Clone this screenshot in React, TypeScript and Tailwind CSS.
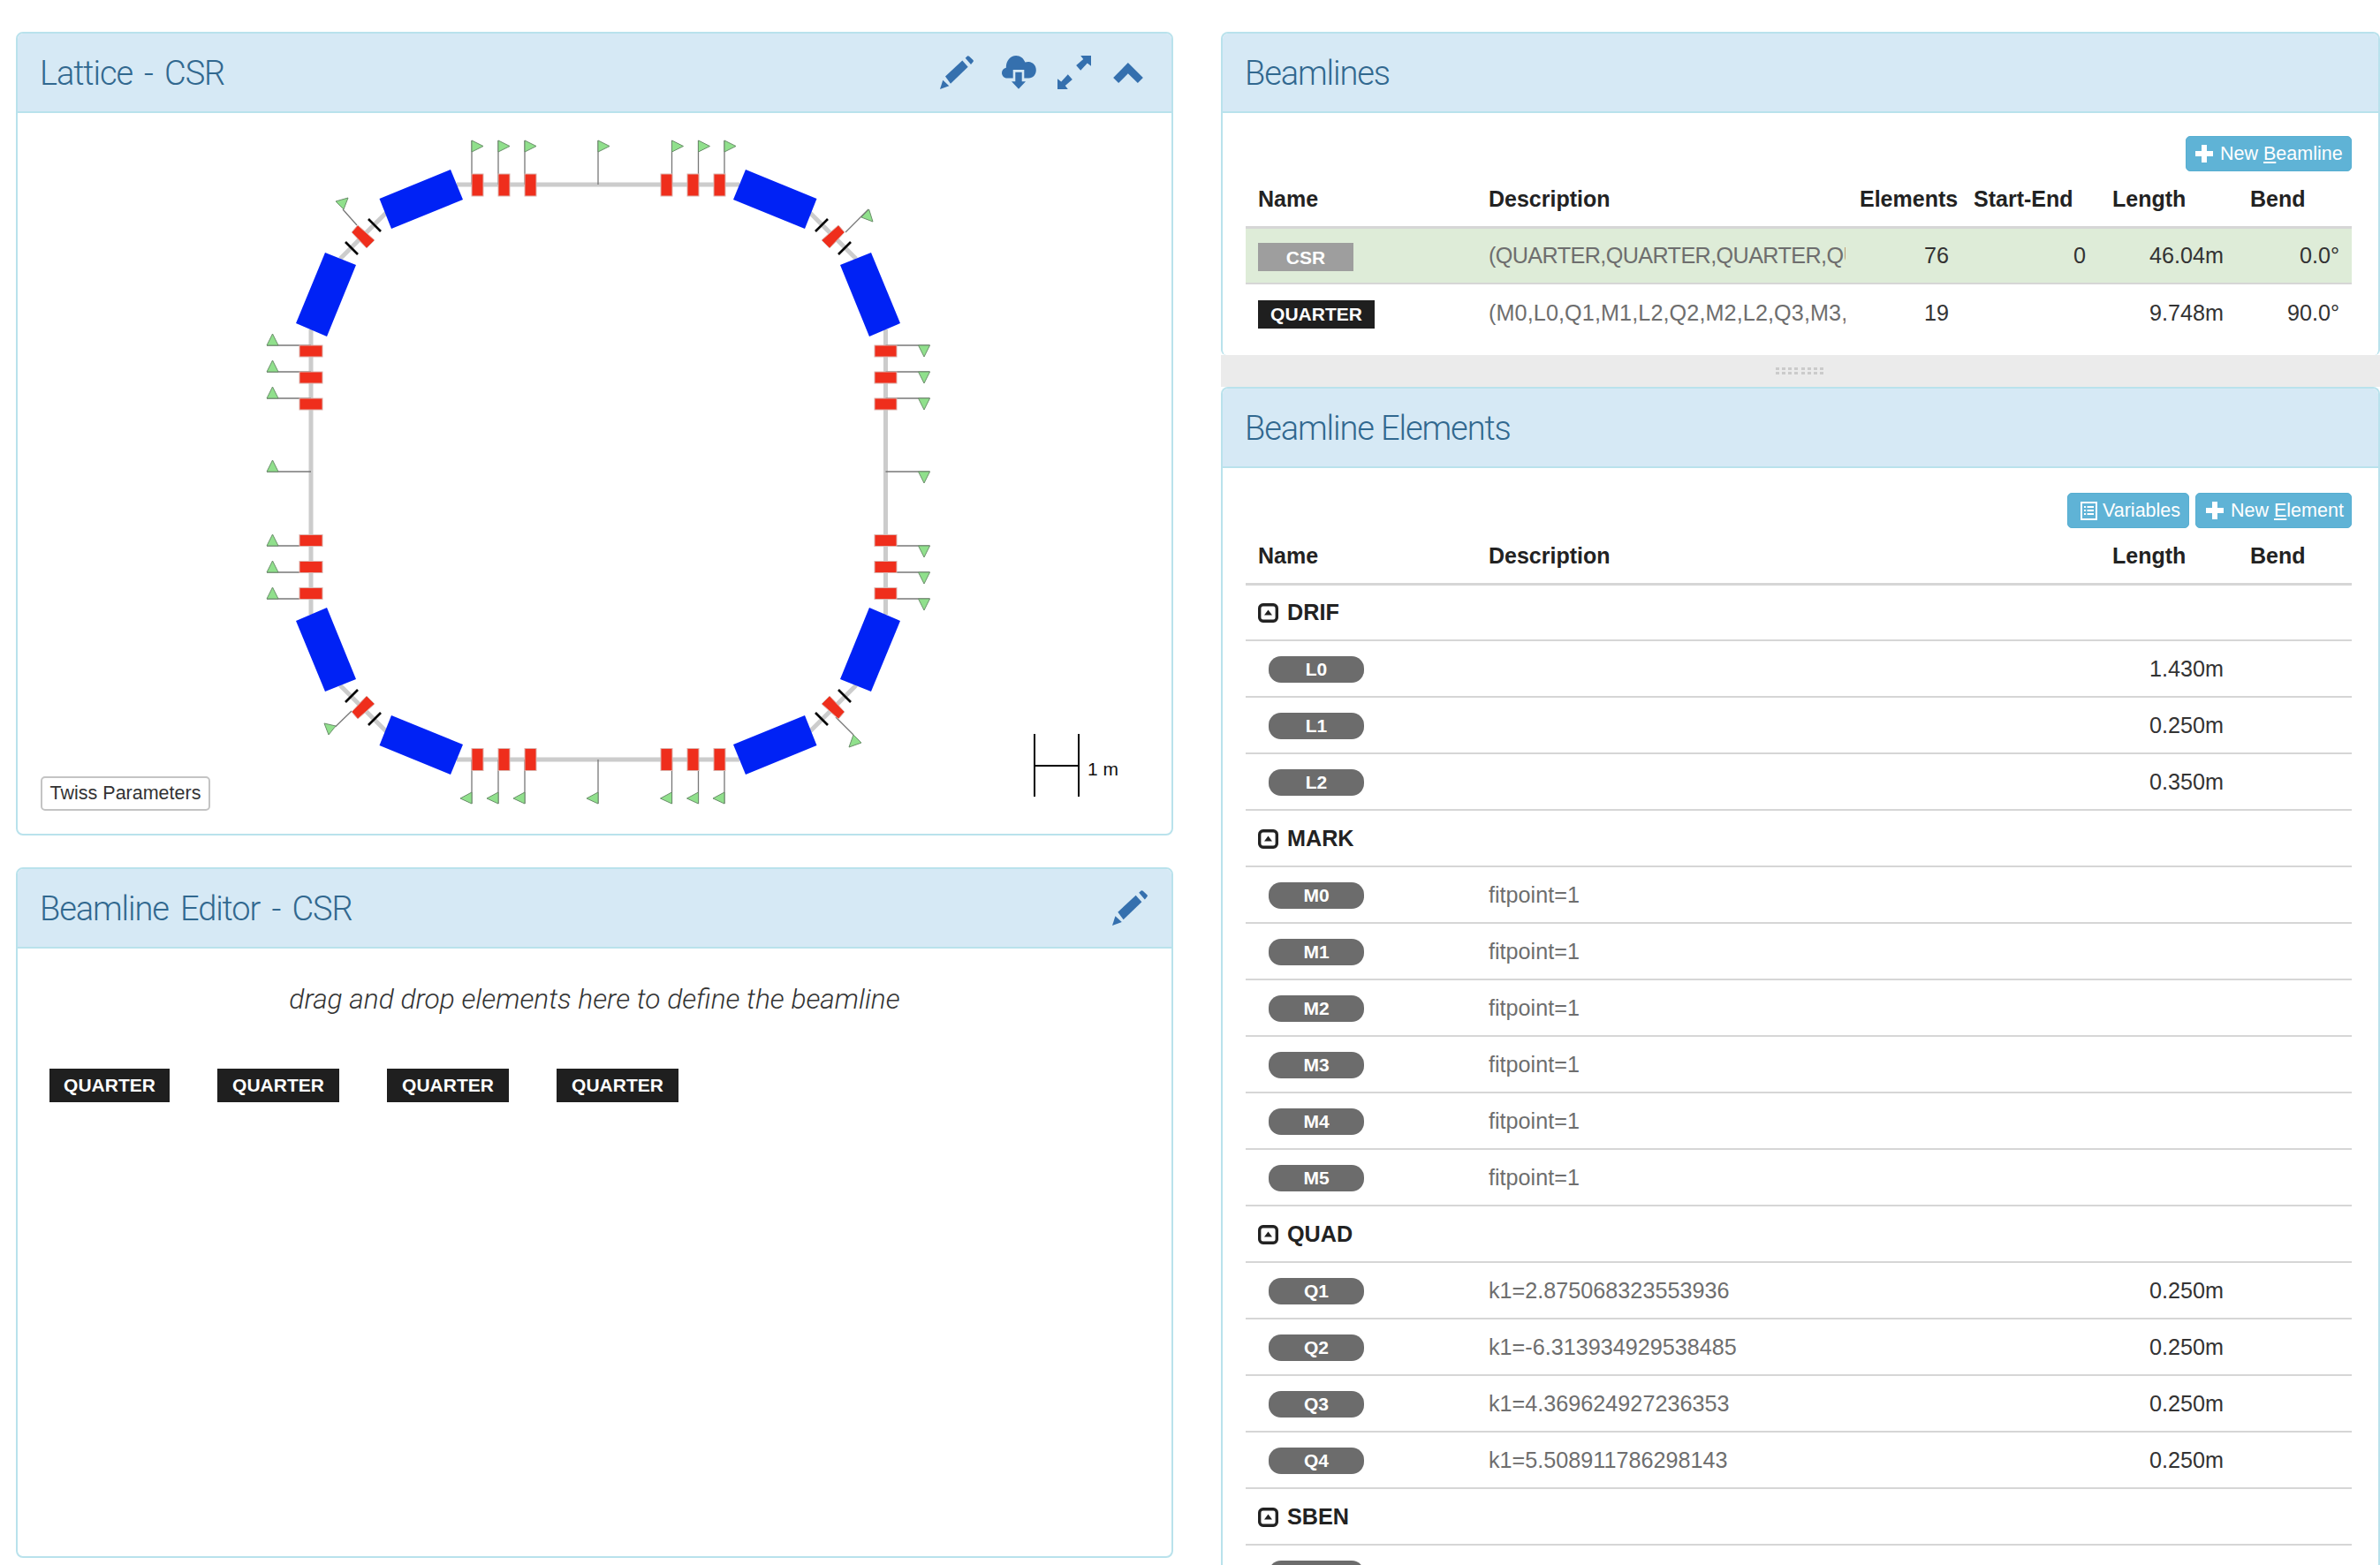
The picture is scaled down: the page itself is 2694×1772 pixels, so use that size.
import type { ReactNode } from "react";

const sans = "font-['Liberation_Sans',Arial,sans-serif]";
const light = "font-['Roboto',sans-serif]";

function PencilIcon({ className }: { className?: string }) {
  return (
    <svg viewBox="0 0 38 38" className={className} fill="#3570ae">
      <path d="M0 38 L3.3 27.7 L10.3 34.3 Z" />
      <path d="M6 23.5 L25.3 5.5 L31.7 12.7 L12 31.7 Z" />
      <path d="M28.7 2.7 L31 0.5 Q32 -0.3 33 0.7 L37.5 5 Q38.3 6 37.5 7 L35 10 Z" />
    </svg>
  );
}

function CloudIcon() {
  return (
    <svg viewBox="0 0 39 38" className="w-[39px] h-[38px]">
      <path
        fill="#3570ae"
        d="M6 25.5 C2.5 25.5 0 22.8 0 19.5 C0 16.6 2 14.4 4.8 13.8 C4.6 6 9.6 0 16.2 0 C20.8 0 24.6 2.8 26.4 7.6 C27.6 7.1 29 6.9 30.4 7 C35.4 7.4 38.8 11.4 38.8 16.2 C38.8 21.6 35.2 25.5 30.5 25.5 Z"
      />
      <rect x="12.7" y="16" width="12.6" height="10" fill="#d6e9f5" />
      <path fill="#3570ae" d="M15.3 18.7 H22.7 V29.3 H27 L19 37.7 L11 29.3 H15.3 Z" />
    </svg>
  );
}

function ExpandIcon() {
  return (
    <svg viewBox="0 0 37.7 37.7" className="w-[38px] h-[38px]" fill="#3570ae">
      <path d="M26 0 H37.7 V11.7 L33.5 8.5 L26 16.7 L21 11 L29 4 Z" />
      <path d="M11.7 37.7 H0 V26 L4.2 29.2 L11.7 21 L16.7 26.7 L8.7 33.7 Z" />
    </svg>
  );
}

function ChevronIcon() {
  return (
    <svg viewBox="0 0 33.7 23" className="w-[34px] h-[23px] ml-[1px]" fill="#3570ae">
      <path d="M16.7 0 L33.7 17 L27.7 23 L16.7 12.3 L6 23 L0 17 Z" />
    </svg>
  );
}

function PlusIcon() {
  return (
    <svg viewBox="0 0 20 20" className="w-[20px] h-[20px] shrink-0" fill="white">
      <path d="M7 0 H13 V7 H20 V13 H13 V20 H7 V13 H0 V7 H7 Z" />
    </svg>
  );
}

function ListIcon() {
  return (
    <svg viewBox="0 0 19 21" className="w-[19px] h-[21px] shrink-0" fill="white">
      <path fillRule="evenodd" d="M0 0 H19 V21 H0 Z M2 2 V19 H17 V2 Z" />
      <path d="M4 5 H6 V7 H4 Z M7.5 5 H15 V7 H7.5 Z M4 9 H6 V11 H4 Z M7.5 9 H15 V11 H7.5 Z M4 13 H6 V15 H4 Z M7.5 13 H15 V15 H7.5 Z" />
    </svg>
  );
}

function CollapseIcon() {
  return (
    <svg viewBox="0 0 23 22" className="w-[23px] h-[22px] shrink-0">
      <rect x="1.7" y="1.7" width="19.6" height="18.6" rx="4" fill="none" stroke="#222" strokeWidth="3.4" />
      <path d="M11.5 7.5 L16 13.5 H7 Z" fill="#222" />
    </svg>
  );
}

function PanelHeader({ title, children }: { title: string; children?: ReactNode }) {
  const spaced = title.includes(" - ");
  return (
    <div className="h-[90px] shrink-0 bg-[#d6e9f5] border-b-2 border-[#b9e2ec] rounded-t-[6px] flex items-center justify-between pl-[25px] pr-[32px]">
      <span className={`${light} font-light text-[38px] tracking-[-1.1px] pt-[2px] text-[#31688f] ${spaced ? "[word-spacing:5px]" : ""}`}>
        {title}
      </span>
      {children}
    </div>
  );
}

function Panel({ className, children }: { className: string; children: ReactNode }) {
  return <div className={`flex flex-col border-2 border-[#b9e2ec] rounded-[8px] bg-white ${className}`}>{children}</div>;
}

// ---- lattice drawing, mirrored around the ring centre ----
const CX = 677;
const CY = 534.5;
const RED = "#ef2e1c";
const GREEN = "#90e08c";

type Pt = [number, number];
const pts = (list: Pt[]) => list.map((p) => p.join(",")).join(" ");
const mirX = (list: Pt[]) => list.map(([x, y]) => [2 * CX - x, y] as Pt);
const mirY = (list: Pt[]) => list.map(([x, y]) => [x, 2 * CY - y] as Pt);

const dipoleA: Pt[] = [[510, 192], [524, 226], [443, 259], [429.5, 225]];
const dipoleB: Pt[] = [[368, 286], [403, 300], [370, 381], [335, 366]];
const cornerQuad: Pt[] = [[405, 255], [424, 272], [415, 281], [398, 263]];

function Flag({ from, to, tri }: { from: Pt; to: Pt; tri: Pt[] }) {
  return (
    <g>
      <line x1={from[0]} y1={from[1]} x2={to[0]} y2={to[1]} stroke="#777" strokeWidth="1.3" />
      <polygon points={pts(tri)} fill={GREEN} stroke="#6b8f6b" strokeWidth="1" />
    </g>
  );
}

function Lattice() {
  const topQuads = [534, 564, 594, 748, 778, 808];
  const sideQuads = [391, 421, 451, 605.5, 635.5, 665.5];
  const topFlags = [534, 564, 594, 677, 760.5, 790.5, 820];
  const sideFlags = [391, 421, 451, 534, 618, 648, 678];
  const corners = [
    (l: Pt[]) => l,
    (l: Pt[]) => mirX(l),
    (l: Pt[]) => mirY(l),
    (l: Pt[]) => mirX(mirY(l)),
  ];

  return (
    <svg viewBox="20 128 1305 814" className="w-[1305px] h-[814px] block">
      {/* beam path */}
      <g stroke="#cccccc" strokeWidth="5" fill="none">
        <line x1="517" y1="209" x2="837" y2="209" />
        <line x1="517" y1="860" x2="837" y2="860" />
        <line x1="352" y1="373" x2="352" y2="696" />
        <line x1="1002.5" y1="373" x2="1002.5" y2="696" />
        {corners.map((f, i) => {
          const [a, b] = f([[385, 293], [437, 241]]);
          return <line key={i} x1={a[0]} y1={a[1]} x2={b[0]} y2={b[1]} />;
        })}
      </g>

      {/* flags */}
      {topFlags.map((x) => (
        <g key={x}>
          <Flag from={[x, 209]} to={[x, 159]} tri={[[x, 159], [x + 13, 165.5], [x, 172]]} />
          <Flag from={[x, 860]} to={[x, 910]} tri={[[x, 910], [x, 897], [x - 13, 904]]} />
        </g>
      ))}
      {sideFlags.map((y) => (
        <g key={y}>
          <Flag from={[352, y]} to={[302, y]} tri={[[302, y], [315, y], [308.5, y - 13]]} />
          <Flag from={[1002.5, y]} to={[1052.5, y]} tri={[[1052.5, y], [1039.5, y], [1046, y + 13]]} />
        </g>
      ))}
      <Flag from={[404, 255]} to={[388, 237]} tri={[[380, 228], [394, 224], [389, 237]]} />
      <Flag from={[957, 263]} to={[983, 237]} tri={[[983.6, 237], [988, 251], [975, 246]]} />
      <Flag from={[398, 805]} to={[379.5, 823]} tri={[[367, 819], [380, 822], [372, 832]]} />
      <Flag from={[946, 812]} to={[966, 832]} tri={[[966, 832], [975, 841], [961, 846]]} />

      {/* quadrupoles */}
      <g fill={RED} stroke="#dcb4ae" strokeWidth="1">
        {topQuads.map((x) => (
          <g key={x}>
            <rect x={x} y="197" width="13" height="25" />
            <rect x={x} y="847.5" width="13" height="25" />
          </g>
        ))}
        {sideQuads.map((y) => (
          <g key={y}>
            <rect x="339" y={y} width="26" height="13" />
            <rect x="990" y={y} width="25" height="13" />
          </g>
        ))}
        {corners.map((f, i) => (
          <polygon key={i} points={pts(f(cornerQuad))} />
        ))}
      </g>

      {/* bending magnets */}
      <g fill="#0022f5">
        {corners.map((f, i) => (
          <g key={i}>
            <polygon points={pts(f(dipoleA))} />
            <polygon points={pts(f(dipoleB))} />
          </g>
        ))}
      </g>

      {/* markers */}
      <g stroke="#000" strokeWidth="2.6">
        {corners.map((f, i) => {
          const [a, b] = f([[417, 248], [431, 262]]);
          const [c, d] = f([[391, 274], [405, 288]]);
          return (
            <g key={i}>
              <line x1={a[0]} y1={a[1]} x2={b[0]} y2={b[1]} />
              <line x1={c[0]} y1={c[1]} x2={d[0]} y2={d[1]} />
            </g>
          );
        })}
      </g>

      {/* scale bar */}
      <g stroke="#000" strokeWidth="2">
        <line x1="1171" y1="831" x2="1171" y2="902" />
        <line x1="1221" y1="831" x2="1221" y2="902" />
        <line x1="1171" y1="867" x2="1221" y2="867" />
      </g>
      <text x="1231" y="878" fontSize="21" fontFamily="Liberation Sans, Arial, sans-serif" fill="#111">
        1 m
      </text>
    </svg>
  );
}

function BlackBadge({ className }: { className: string }) {
  return (
    <span className={`flex items-center justify-center bg-[#1f1f1f] text-white font-bold text-[21px] ${className}`}>
      QUARTER
    </span>
  );
}

function ActionButton({ icon, children, className }: { icon: ReactNode; children: ReactNode; className: string }) {
  return (
    <button className={`h-[40px] flex items-center bg-[#5fb3d6] border border-[#56aed1] rounded-[5px] text-white text-[21.5px] ${className}`}>
      {icon}
      <span>{children}</span>
    </button>
  );
}

const th = "text-left font-bold text-[25px] text-[#222] px-[14px] pt-[2px] h-[63px] align-middle border-b-[3px] border-[#d6d6d6]";
const cell = "h-[64px] px-[14px] pt-[2px] align-middle text-[25.2px]";
const td = `${cell} border-b-[2px] border-[#d6d6d6]`;

function BeamlinesTable() {
  const rows = [
    { name: "CSR", desc: "(QUARTER,QUARTER,QUARTER,QUARTER)", spacing: "tracking-[-0.6px]", count: "76", start: "0", len: "46.04m", bend: "0.0°" },
    { name: "QUARTER", desc: "(M0,L0,Q1,M1,L2,Q2,M2,L2,Q3,M3,L2,Q4,M4,L1,Q4,L2,M5,Q3)", spacing: "tracking-[0.1px]", count: "19", start: "", len: "9.748m", bend: "90.0°" },
  ];
  return (
    <table className="table-fixed w-full border-collapse">
      <colgroup>
        <col className="w-[261px]" />
        <col className="w-[420px]" />
        <col className="w-[129px]" />
        <col className="w-[157px]" />
        <col className="w-[156px]" />
        <col className="w-[129px]" />
      </colgroup>
      <thead>
        <tr>
          <th className={th}>Name</th>
          <th className={th}>Description</th>
          <th className={th}>Elements</th>
          <th className={th}>Start-End</th>
          <th className={th}>Length</th>
          <th className={th}>Bend</th>
        </tr>
      </thead>
      <tbody>
        {rows.map((r, i) => {
          const c = i === 0 ? td : cell;
          return (
            <tr key={r.name} className={i === 0 ? "bg-[#deecd8]" : ""}>
              <td className={c}>
                {i === 0 ? (
                  <span className="mt-[2px] flex items-center justify-center w-[108px] h-[32px] bg-[#9e9e9e] text-white font-bold text-[21px]">CSR</span>
                ) : (
                  <BlackBadge className="mt-[2px] w-[132px] h-[32px]" />
                )}
              </td>
              <td className={`${c} pr-0 text-[#6e6e6e]`}>
                <div className={`w-[404px] overflow-hidden whitespace-nowrap ${r.spacing}`}>{r.desc}</div>
              </td>
              <td className={`${c} text-right text-[#333]`}>{r.count}</td>
              <td className={`${c} text-right text-[#333] pr-[16px]`}>{r.start}</td>
              <td className={`${c} text-right text-[#333] pr-[16px]`}>{r.len}</td>
              <td className={`${c} text-right text-[#333]`}>{r.bend}</td>
            </tr>
          );
        })}
      </tbody>
    </table>
  );
}

const groups = [
  {
    name: "DRIF",
    items: [
      { name: "L0", desc: "", len: "1.430m" },
      { name: "L1", desc: "", len: "0.250m" },
      { name: "L2", desc: "", len: "0.350m" },
    ],
  },
  {
    name: "MARK",
    items: ["M0", "M1", "M2", "M3", "M4", "M5"].map((name) => ({ name, desc: "fitpoint=1", len: "" })),
  },
  {
    name: "QUAD",
    items: [
      { name: "Q1", desc: "k1=2.875068323553936", len: "0.250m" },
      { name: "Q2", desc: "k1=-6.313934929538485", len: "0.250m" },
      { name: "Q3", desc: "k1=4.369624927236353", len: "0.250m" },
      { name: "Q4", desc: "k1=5.508911786298143", len: "0.250m" },
    ],
  },
  {
    name: "SBEN",
    items: [{ name: "", desc: "", len: "" }],
  },
];

function ElementsTable() {
  return (
    <table className="table-fixed w-full border-collapse">
      <colgroup>
        <col className="w-[261px]" />
        <col className="w-[706px]" />
        <col className="w-[156px]" />
        <col className="w-[129px]" />
      </colgroup>
      <thead>
        <tr>
          <th className={th}>Name</th>
          <th className={th}>Description</th>
          <th className={th}>Length</th>
          <th className={th}>Bend</th>
        </tr>
      </thead>
      <tbody>
        {groups.flatMap((g) => [
          <tr key={g.name}>
            <td colSpan={4} className={td}>
              <span className="flex items-center gap-[10px] font-bold text-[#222]">
                <CollapseIcon />
                {g.name}
              </span>
            </td>
          </tr>,
          ...g.items.map((it) => (
            <tr key={g.name + it.name}>
              <td className={td}>
                <span className="ml-[12px] flex items-center justify-center w-[108px] h-[30px] rounded-[14px] bg-[#6c6c6c] text-white font-bold text-[21px]">
                  {it.name}
                </span>
              </td>
              <td className={`${td} text-[#6e6e6e]`}>{it.desc}</td>
              <td className={`${td} text-right text-[#333] pr-[16px]`}>{it.len}</td>
              <td className={td}></td>
            </tr>
          )),
        ])}
      </tbody>
    </table>
  );
}

export default function App() {
  return (
    <div className={`${sans} w-[2694px] h-[1772px] overflow-hidden bg-white flex items-start pt-[36px] pl-[18px]`}>
      <div className="w-[1310px] shrink-0 flex flex-col gap-[36px]">
        <Panel className="h-[910px]">
          <PanelHeader title="Lattice - CSR">
            <div className="flex items-center gap-[28px]">
              <PencilIcon className="w-[38px] h-[38px]" />
              <div className="flex items-center gap-[24px] ml-[4px]">
                <CloudIcon />
                <ExpandIcon />
                <ChevronIcon />
              </div>
            </div>
          </PanelHeader>
          <div className="relative flex-1">
            <Lattice />
            <button className="absolute left-[26px] bottom-[26px] w-[192px] h-[39px] border-2 border-[#c4c4c4] rounded-[5px] bg-white text-[21.5px] text-[#333]">
              Twiss Parameters
            </button>
          </div>
        </Panel>

        <Panel className="h-[782px]">
          <PanelHeader title="Beamline Editor - CSR">
            <PencilIcon className="w-[40px] h-[40px] -mr-[5px]" />
          </PanelHeader>
          <div className="flex-1 flex flex-col pt-[34px]">
            <p className={`${light} font-light italic text-[31.7px] text-[#333] text-center`}>
              drag and drop elements here to define the beamline
            </p>
            <div className="mt-[54px] ml-[36px] flex gap-[54px]">
              {[0, 1, 2, 3].map((i) => (
                <BlackBadge key={i} className={`${i === 0 ? "w-[136px]" : "w-[138px]"} h-[38px]`} />
              ))}
            </div>
          </div>
        </Panel>
      </div>

      <div className="ml-[54px] flex-1 min-w-0 flex flex-col">
        <Panel className="h-[366px] border-b-0 rounded-b-[6px]">
          <PanelHeader title="Beamlines" />
          <div className="pl-[26px] pr-[30px] pt-[26px]">
            <div className="flex justify-end">
              <ActionButton icon={<PlusIcon />} className="w-[188px] pl-[10px] gap-[8px]">
                New <span className="underline">B</span>eamline
              </ActionButton>
            </div>
            <BeamlinesTable />
          </div>
        </Panel>

        <div className="h-[36px] shrink-0 bg-[#ebebeb] flex items-center justify-center pr-[2px]">
          <div className="grid grid-cols-8 gap-x-[3.2px] gap-y-[2px]">
            {Array.from({ length: 16 }, (_, i) => (
              <span key={i} className="w-[4px] h-[3px] bg-[#cbcbcb]" />
            ))}
          </div>
        </div>

        <Panel className="border-b-0 rounded-b-none">
          <PanelHeader title="Beamline Elements" />
          <div className="pl-[26px] pr-[30px] pt-[28px]">
            <div className="flex justify-end gap-[7px]">
              <ActionButton icon={<ListIcon />} className="w-[138px] pl-[14px] gap-[6px]">
                Variables
              </ActionButton>
              <ActionButton icon={<PlusIcon />} className="w-[177px] pl-[11px] gap-[8px]">
                New <span className="underline">E</span>lement
              </ActionButton>
            </div>
            <ElementsTable />
          </div>
        </Panel>
      </div>
    </div>
  );
}
